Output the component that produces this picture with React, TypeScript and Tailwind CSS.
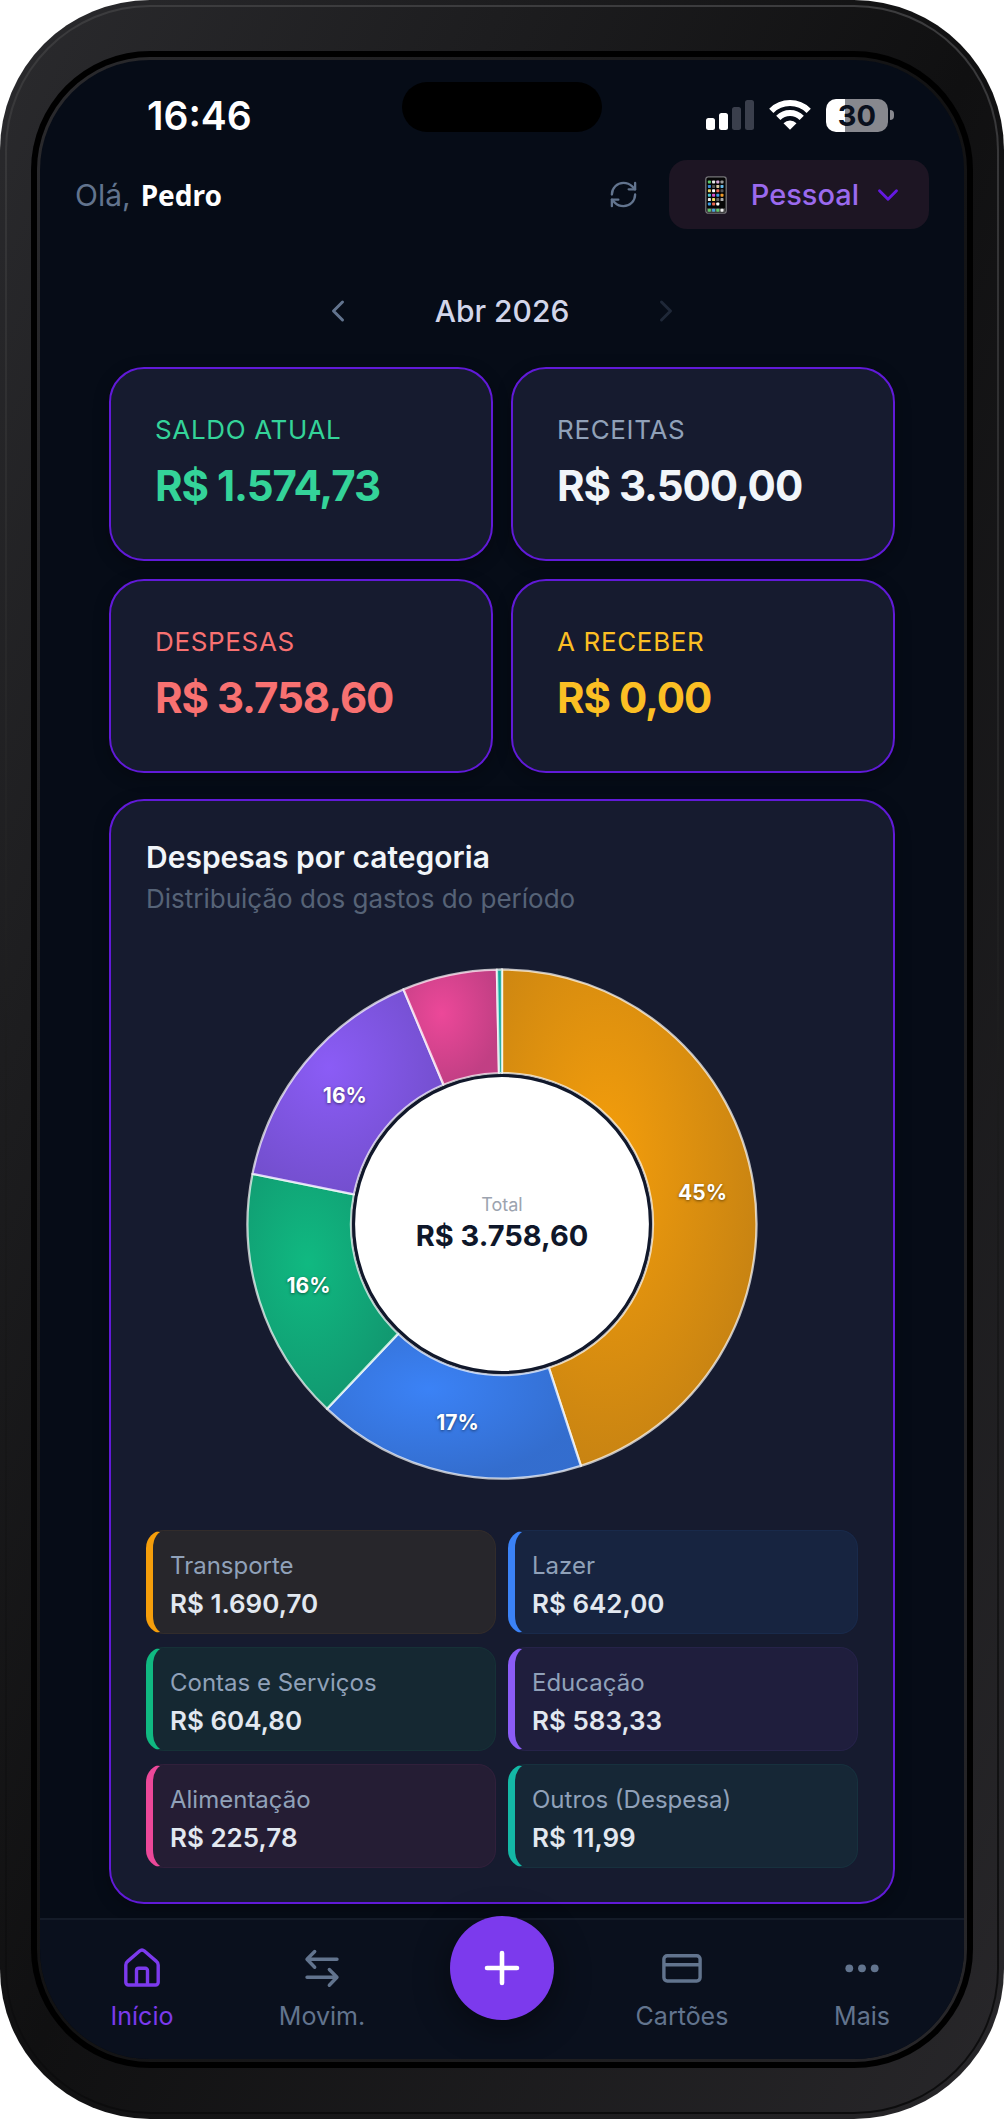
import { ChevronDown, ChevronLeft, ChevronRight, RefreshCw } from 'lucide-react';

const SUMMARY = [
  { label: 'Saldo atual', value: 'R$ 1.574,73', labelClass: 'text-[#34d399]', valueClass: 'text-[#34d399]' },
  { label: 'Receitas', value: 'R$ 3.500,00', labelClass: 'text-slate-400', valueClass: 'text-slate-100' },
  { label: 'Despesas', value: 'R$ 3.758,60', labelClass: 'text-[#f87171]', valueClass: 'text-[#f87171]' },
  { label: 'A receber', value: 'R$ 0,00', labelClass: 'text-[#fbbf24]', valueClass: 'text-[#fbbf24]' },
];

const CATEGORIES = [
  { id: 'transporte', name: 'Transporte', amount: 1690.7, text: 'R$ 1.690,70', color: '#f59e0b', box: 'bg-[#27262b] border-[#322c2b] border-l-[#f59e0b]' },
  { id: 'lazer', name: 'Lazer', amount: 642, text: 'R$ 642,00', color: '#3b82f6', box: 'bg-[#172440] border-[#192a4b] border-l-[#3b82f6]' },
  { id: 'contas', name: 'Contas e Serviços', amount: 604.8, text: 'R$ 604,80', color: '#10b981', box: 'bg-[#152832] border-[#163137] border-l-[#10b981]' },
  { id: 'educacao', name: 'Educação', amount: 583.33, text: 'R$ 583,33', color: '#8b5cf6', box: 'bg-[#1f1e3d] border-[#262349] border-l-[#8b5cf6]' },
  { id: 'alimentacao', name: 'Alimentação', amount: 225.78, text: 'R$ 225,78', color: '#ec4899', box: 'bg-[#251d34] border-[#31203b] border-l-[#ec4899]' },
  { id: 'outros', name: 'Outros (Despesa)', amount: 11.99, text: 'R$ 11,99', color: '#14b8a6', box: 'bg-[#162736] border-[#17313e] border-l-[#14b8a6]' },
];

const TOTAL = CATEGORIES.reduce((sum, c) => sum + c.amount, 0);

const point = (radius: number, turn: number) => {
  const a = turn * Math.PI * 2;
  return [256 + radius * Math.sin(a), 256 - radius * Math.cos(a)];
};

const SLICES = CATEGORIES.map((cat, i) => {
  const start = CATEGORIES.slice(0, i).reduce((sum, c) => sum + c.amount, 0) / TOTAL;
  const share = cat.amount / TOTAL;
  const end = start + share;
  const [x1, y1] = point(254.5, start);
  const [x2, y2] = point(254.5, end);
  const [x3, y3] = point(151, end);
  const [x4, y4] = point(151, start);
  const [lx, ly] = point(203, start + share / 2);
  return {
    ...cat,
    share,
    lx,
    ly,
    d: `M${x1} ${y1}A254.5 254.5 0 0 1 ${x2} ${y2}L${x3} ${y3}A151 151 0 0 0 ${x4} ${y4}Z`,
  };
});

const StatusBar = () => (
  <div className="grid grid-cols-[1fr_200px_1fr] pt-[22px]">
    <div className="flex h-[66px] items-center pl-[107px] text-[39px] leading-none font-semibold text-white">16:46</div>
    <div className="h-[50px] rounded-full bg-black" />
    <div className="flex h-[66px] items-center justify-end pr-[70px]">
      <svg className="mr-[15px]" width="48" height="30" viewBox="0 0 48 30" aria-hidden="true">
        <rect x="0" y="18" width="9" height="12" rx="2.5" fill="#fff" />
        <rect x="13" y="13" width="9" height="17" rx="2.5" fill="#fff" />
        <rect x="26" y="7" width="9" height="23" rx="2.5" fill="#3a3f4c" />
        <rect x="39" y="0" width="9" height="30" rx="2.5" fill="#3a3f4c" />
      </svg>
      <svg className="mr-[15px]" width="42" height="30" viewBox="0 0 42 30" fill="none" stroke="#fff" strokeWidth="6" aria-hidden="true">
        <path d="M2.3 10.8A26.5 26.5 0 0 1 39.7 10.8" />
        <path d="M9.3 17.8A16.6 16.6 0 0 1 32.7 17.8" />
        <path d="M21 29.8L14.5 23.2A9.2 9.2 0 0 1 27.5 23.2Z" fill="#fff" stroke="none" />
      </svg>
      <div className="flex h-[33px] w-[62px] items-center justify-center rounded-[10px] bg-[linear-gradient(90deg,#fff_19px,#87888e_19px)] text-[29px] leading-none font-bold text-[#0a101d]">
        30
      </div>
      <div className="ml-[2px] h-[10px] w-[4px] rounded-r-full bg-[#87888e]" />
    </div>
  </div>
);

const APP_DOTS = [
  ['#5fc96b', '#e8e8e8', '#d9a8d8', '#9a9a9a'],
  ['#3a8fe0', '#555', '#d8c9a0', '#63b8ea'],
  ['#e9d36a', '#fff', '#e8654f', '#555'],
  ['#4bc8d8', '#d653c8', '#3a9be8', '#f09a28'],
  ['#e8e8e8', '#f2e06a', '#666', '#aaa'],
  ['#3a9be8', '#e8654f', '#fff', 'none'],
];

const PhoneIcon = () => (
  <svg className="mr-6" width="22" height="38" viewBox="0 0 22 38" aria-hidden="true">
    <rect x="0.8" y="0.8" width="20.4" height="36.4" rx="2.5" fill="#060606" stroke="#77767a" strokeWidth="1.3" />
    {APP_DOTS.map((row, r) =>
      row.map((fill, c) => (
        <rect key={`${r}-${c}`} x={2.9 + c * 4.2} y={4.5 + r * 4.4} width="3" height="3" rx="0.7" fill={fill} />
      ))
    )}
    <rect x="2" y="32.3" width="18" height="3.8" fill="#4a4a4a" />
    {['#5fc96b', '#4aa8e0', '#5fc96b', '#f0f0f0'].map((fill, c) => (
      <rect key={c} x={2.9 + c * 4.2} y="32.7" width="3" height="3" rx="0.7" fill={fill} />
    ))}
  </svg>
);

const Header = () => (
  <header className="flex items-center justify-between px-[35px] pt-3">
    <p className="flex items-baseline gap-2.5 text-[30px] leading-9">
      <span className="text-slate-500">Olá,</span>
      <span className="font-['Noto_Sans',sans-serif] text-[28px] font-bold text-white">Pedro</span>
    </p>
    <div className="flex items-center gap-[30px]">
      <button type="button" aria-label="Atualizar" className="text-slate-500">
        <RefreshCw size={31} strokeWidth={1.8} />
      </button>
      <button type="button" aria-haspopup="menu" className="flex h-[69px] items-center rounded-[18px] bg-[#1d1523] pr-6 pl-9 text-[29px] font-medium text-[#9b6aee]">
        <PhoneIcon />
        <span className="mr-3">Pessoal</span>
        <ChevronDown size={34} strokeWidth={2} className="text-[#6419e0]" />
      </button>
    </div>
  </header>
);

const MonthPicker = () => (
  <div className="mx-auto mt-16 flex h-9 w-[368px] items-center justify-between">
    <button type="button" aria-label="Mês anterior" className="flex w-10 justify-center text-slate-500">
      <ChevronLeft size={36} strokeWidth={2} />
    </button>
    <span className="text-[30px] leading-9 font-medium text-[#d2d6ea]">Abr 2026</span>
    <button type="button" aria-label="Próximo mês" disabled className="flex w-10 justify-center text-[#1f2838]">
      <ChevronRight size={36} strokeWidth={2} />
    </button>
  </div>
);

const DonutChart = () => (
  <svg className="mx-auto mt-[53px] block w-full max-w-[512px]" viewBox="0 0 512 512" role="img" aria-label="Despesas por categoria">
    <defs>
      {SLICES.map((s) => (
        <radialGradient key={s.id} id={`grad-${s.id}`} cx="40%" cy="38%" r="62%">
          <stop offset="0%" stopColor={s.color} />
          <stop offset="100%" stopColor={s.color} stopOpacity="0.8" />
        </radialGradient>
      ))}
    </defs>
    {SLICES.map((s) => (
      <path key={s.id} d={s.d} fill={`url(#grad-${s.id})`} stroke="#fff" strokeOpacity="0.7" strokeWidth="2.3" strokeLinejoin="round" />
    ))}
    <circle cx="256" cy="256" r="148.4" fill="#fff" stroke="#11182b" strokeWidth="3" />
    {SLICES.filter((s) => s.share > 0.1).map((s) => (
      <text key={s.id} x={s.lx} y={s.ly + 7.5} textAnchor="middle" fill="#fff" className="text-[21px] font-bold [text-shadow:0_1px_3px_rgba(0,0,0,0.5)]">
        {Math.round(s.share * 100)}%
      </text>
    ))}
    <text x="256" y="243" textAnchor="middle" fill="#9ca3af" className="text-[18px]">Total</text>
    <text x="256" y="278" textAnchor="middle" fill="#0f172a" className="text-[29px] font-bold">R$ 3.758,60</text>
  </svg>
);

const BottomNav = () => (
  <nav className="mt-[14px] border-t-2 border-[#141b28] bg-[#0a101d] px-3 pt-7 pb-[27px] text-[25px] leading-8 text-slate-500">
    <ul className="grid grid-cols-5 items-start">
      <li>
        <a href="#inicio" className="flex flex-col items-center gap-3 text-[#7c3aed]">
          <svg width="40" height="40" viewBox="0 0 40 40" fill="none" stroke="currentColor" strokeWidth="3.4" aria-hidden="true">
            <path d="M3.8 17c0-1.6.6-2.7 1.8-3.6L17.6 3c1.4-1.2 3.4-1.2 4.8 0l12 10.4c1.2.9 1.8 2 1.8 3.6v17.3a2.7 2.7 0 0 1-2.7 2.7h-27a2.7 2.7 0 0 1-2.7-2.7Z" />
            <path d="M14.5 37V22.5a2.2 2.2 0 0 1 2.2-2.2h6.6a2.2 2.2 0 0 1 2.2 2.2V37" />
          </svg>
          Início
        </a>
      </li>
      <li>
        <a href="#movimentos" className="flex flex-col items-center gap-3">
          <svg width="40" height="40" viewBox="0 0 40 40" fill="none" stroke="currentColor" strokeWidth="3.4" strokeLinecap="round" strokeLinejoin="round" aria-hidden="true">
            <path d="M35 11.3H5.2M12.7 3.5L5 11.3l7.7 7.9M5 29.3h29.8M27.3 21.5l7.7 7.8-7.7 7.9" />
          </svg>
          Movim.
        </a>
      </li>
      <li className="flex justify-center">
        <button type="button" aria-label="Adicionar" className="-mt-8 flex size-[104px] items-center justify-center rounded-full bg-[#7c3aed] text-white shadow-[0_8px_36px_rgba(0,0,0,0.45)]">
          <svg width="40" height="40" viewBox="0 0 40 40" stroke="currentColor" strokeWidth="4.6" strokeLinecap="round" aria-hidden="true">
            <path d="M20 5v30M5 20h30" />
          </svg>
        </button>
      </li>
      <li>
        <a href="#cartoes" className="flex flex-col items-center gap-3">
          <svg width="40" height="40" viewBox="0 0 40 40" fill="none" stroke="currentColor" strokeWidth="3.4" aria-hidden="true">
            <rect x="1.9" y="7.7" width="36.2" height="25.3" rx="3.4" />
            <path d="M2 16.7h36" />
          </svg>
          Cartões
        </a>
      </li>
      <li>
        <a href="#mais" className="flex flex-col items-center gap-3">
          <svg width="40" height="40" viewBox="0 0 40 40" fill="currentColor" aria-hidden="true">
            <circle cx="7.3" cy="20.3" r="3.9" />
            <circle cx="20" cy="20.3" r="3.9" />
            <circle cx="32.7" cy="20.3" r="3.9" />
          </svg>
          Mais
        </a>
      </li>
    </ul>
  </nav>
);

export default function App() {
  return (
    <div className="bg-white font-['Inter',sans-serif]">
      {/* Phone frame */}
      <div className="rounded-[150px] bg-[linear-gradient(to_bottom_right,#2a2a2d,#101011_50%,#28272a)] p-[5px]">
        <div className="rounded-[145px] bg-linear-to-b from-[#3c3c3e] via-[#1c1c1d] to-[#0c0c0d] p-[2px]">
          <div className="rounded-[143px] bg-[linear-gradient(to_bottom_right,#2a2a2d,#101011_50%,#28272a)] px-6 py-11">
            <div className="rounded-[119px] bg-black p-[6px]">
              <div className="rounded-[113px] bg-[linear-gradient(to_bottom_right,#2a2a2d,#121213_50%,#28272a)] p-[3px]">
                <div className="overflow-hidden rounded-[110px] bg-[#060c17]">
                  <StatusBar />
                  <Header />
                  <MonthPicker />

                  <main className="px-[69px]">
                    <div className="mt-[38px] grid grid-cols-2 gap-[18px]">
                      {SUMMARY.map((item) => (
                        <div key={item.label} className="rounded-[35px] border-2 border-[#611ad8] bg-[#161b2f] px-11 pt-[45px] pb-[47px] shadow-[0_4px_16px_rgba(0,0,0,0.3)]">
                          <p className={`text-[26px] leading-8 tracking-wide uppercase ${item.labelClass}`}>{item.label}</p>
                          <p className={`mt-[14px] text-[42px] leading-[52px] font-bold tracking-tight ${item.valueClass}`}>{item.value}</p>
                        </div>
                      ))}
                    </div>

                    <section className="mt-[26px] rounded-[35px] border-2 border-[#611ad8] bg-[#161b2f] px-[35px] pt-[38px] pb-[34px] shadow-[0_4px_16px_rgba(0,0,0,0.3)]">
                      <h2 className="text-[30px] leading-9 font-semibold text-slate-100">Despesas por categoria</h2>
                      <p className="mt-2 text-[26px] leading-8 text-[#566377]">Distribuição dos gastos do período</p>
                      <DonutChart />
                      <ul className="mt-[50px] grid grid-cols-2 gap-x-3 gap-y-[13px]">
                        {CATEGORIES.map((cat) => (
                          <li key={cat.id} className={`rounded-[18px] border border-l-[7px] pt-5 pr-4 pb-[13px] pl-[17px] ${cat.box}`}>
                            <p className="text-[24px] leading-[30px] text-slate-400">{cat.name}</p>
                            <p className="mt-[7px] text-[26px] leading-8 font-semibold text-slate-200">{cat.text}</p>
                          </li>
                        ))}
                      </ul>
                    </section>
                  </main>

                  <BottomNav />
                </div>
              </div>
            </div>
          </div>
        </div>
      </div>
    </div>
  );
}
